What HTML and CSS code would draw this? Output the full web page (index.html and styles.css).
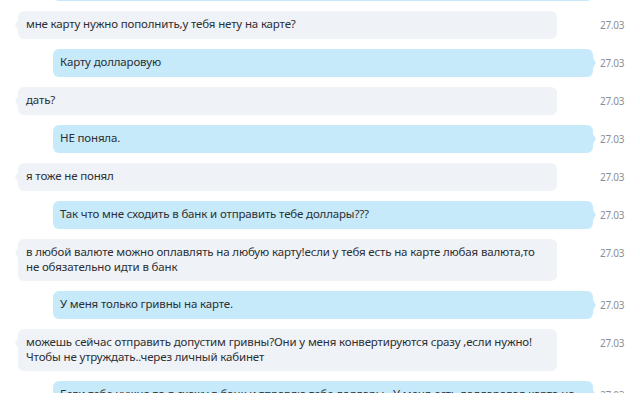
FILE: index.html
```html
<!DOCTYPE html>
<html lang="ru">
<head>
<meta charset="utf-8">
<title>Чат</title>
<link rel="stylesheet" href="styles.css">
</head>
<body>
<div class="chat">
  <div class="messages">
    <div class="row out"><div class="bubble">&nbsp;</div></div>
    <div class="row in"><div class="bubble">мне карту нужно пополнить,у тебя нету на карте?</div><span class="time">27.03</span></div>
    <div class="row out"><div class="bubble">Карту долларовую</div><span class="time">27.03</span></div>
    <div class="row in"><div class="bubble">дать?</div><span class="time">27.03</span></div>
    <div class="row out"><div class="bubble">НЕ поняла.</div><span class="time">27.03</span></div>
    <div class="row in"><div class="bubble">я тоже не понял</div><span class="time">27.03</span></div>
    <div class="row out"><div class="bubble">Так что мне сходить в банк и отправить тебе доллары???</div><span class="time">27.03</span></div>
    <div class="row in"><div class="bubble">в любой валюте можно оплавлять на любую карту!если у тебя есть на карте любая валюта,то не обязательно идти в банк</div><span class="time">27.03</span></div>
    <div class="row out"><div class="bubble">У меня только гривны на карте.</div><span class="time">27.03</span></div>
    <div class="row in"><div class="bubble">можешь сейчас отправить допустим гривны?Они у меня конвертируются сразу ,если нужно! Чтобы не утруждать..через личный кабинет</div><span class="time">27.03</span></div>
    <div class="row out"><div class="bubble">Если тебе нужно то я схожу в банк и тправлю тебе доллары.. У меня есть долларовая карта но</div><span class="time">27.03</span></div>
  </div>
</div>
<div class="footer"></div>
</body>
</html>
```

FILE: styles.css
```css
html, body {
  margin: 0;
  padding: 0;
  background: #ffffff;
}

body {
  font-family: "Noto Sans", "Open Sans", sans-serif;
  color: #2c2f33;
  width: 640px;
  height: 405px;
  overflow: hidden;
}

.chat {
  height: 393px;
  overflow: hidden;
}

.messages {
  margin-top: -27px;
  display: flex;
  flex-direction: column;
  gap: 10px;
}

.row {
  display: grid;
  grid-template-columns: 593px 1fr;
  align-items: start;
}

.bubble {
  position: relative;
  box-sizing: border-box;
  min-height: 28px;
  padding: 6px 8px 7px;
  font-size: 11.5px;
  letter-spacing: -0.15px;
  line-height: 14.5px;
  border-radius: 6px;
}

.in .bubble {
  margin: 0 36px 0 18px;
  background: #eff2f6;
}

.out .bubble {
  margin-left: 53px;
  padding-left: 7px;
  background: #c6eafa;
}

/* little tails pointing at the sender side */
.bubble::before {
  content: "";
  position: absolute;
  top: 9px;
  width: 0;
  height: 0;
  border-top: 5px solid transparent;
  border-bottom: 5px solid transparent;
}

.in .bubble::before {
  left: -3px;
  border-right: 3px solid #eff2f6;
}

.out .bubble::before {
  right: -3px;
  border-left: 3px solid #c6eafa;
}

.time {
  padding-left: 7px;
  padding-top: 8px;
  font-size: 10px;
  letter-spacing: -0.3px;
  line-height: 12px;
  color: #8a8f96;
}

.footer {
  height: 12px;
  background: #ffffff;
}
```
